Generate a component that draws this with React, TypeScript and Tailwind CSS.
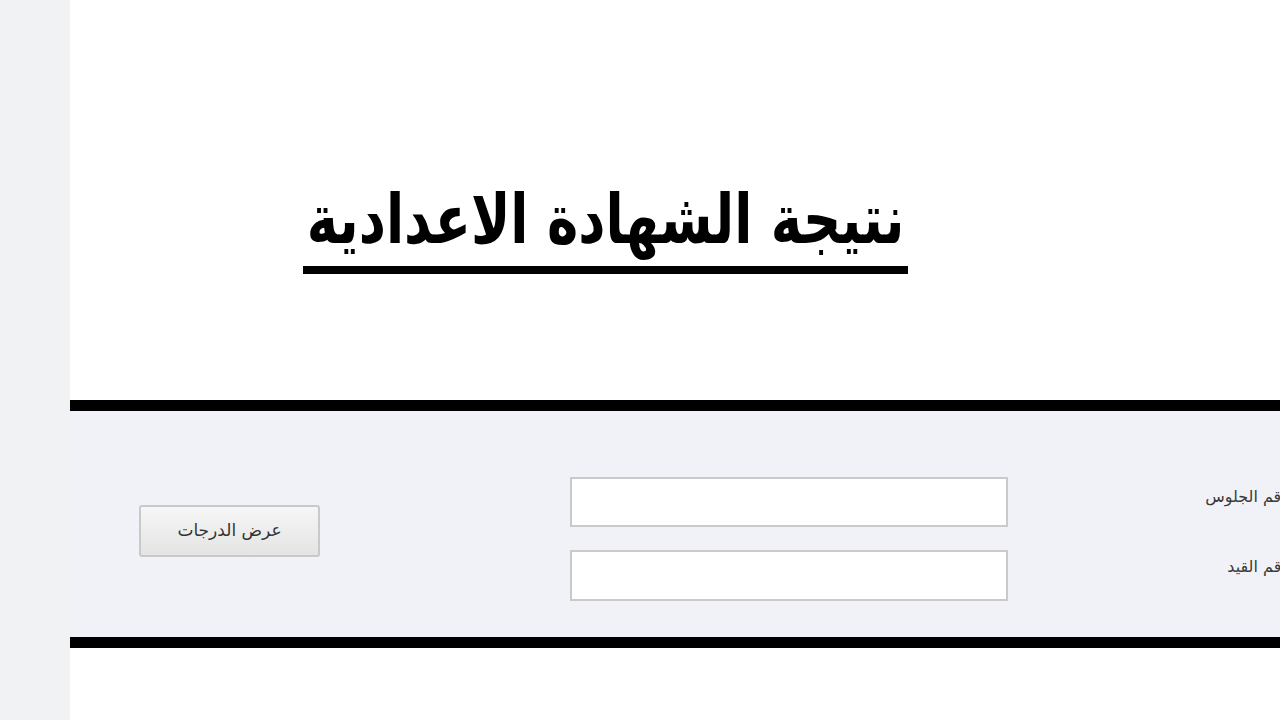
export default function App() {
  return (
    <div className="flex h-[720px] w-[1280px] overflow-hidden bg-white font-['DejaVu_Sans',sans-serif]">
      {/* left grey strip */}
      <div className="w-[70px] shrink-0 bg-[#f1f2f4]" />

      {/* main page */}
      <div className="flex flex-1 flex-col overflow-hidden">
        <div className="h-[400px] shrink-0 pl-[233px] pt-[194px]">
          <h1
            dir="rtl"
            className="inline-block w-[605px] border-b-[8px] border-black text-center text-[53px] leading-[72px] font-bold whitespace-nowrap text-black"
          >
            <span className="inline-block origin-bottom scale-y-[1.3]">نتيجة الشهادة الاعدادية</span>
          </h1>
        </div>

        {/* form panel */}
        <div className="flex h-[248px] shrink-0 border-y-[11px] border-black bg-[#f1f2f7]">
          <div className="pl-[69px] pt-[94px]">
            <button className="h-[52px] w-[181px] rounded-[3px] border-2 border-[#c9c9c9] bg-gradient-to-b from-[#f6f6f6] to-[#e4e4e4] text-[17px] text-[#333]">
              عرض الدرجات
            </button>
          </div>
          <div className="ml-[250px] flex flex-col gap-[23px] pt-[66px]">
            <input className="h-[50px] w-[438px] border-2 border-[#cacaca] bg-white" />
            <input className="h-[51px] w-[438px] border-2 border-[#cacaca] bg-white" />
          </div>
          <div dir="rtl" className="-mr-[9px] flex flex-1 flex-col pt-[74px] text-[16px] text-[#3a3a3a]">
            <div className="h-[70px] whitespace-nowrap">رقم الجلوس</div>
            <div className="whitespace-nowrap">رقم القيد</div>
          </div>
        </div>

        <div className="flex-1 bg-white" />
      </div>
    </div>
  );
}
